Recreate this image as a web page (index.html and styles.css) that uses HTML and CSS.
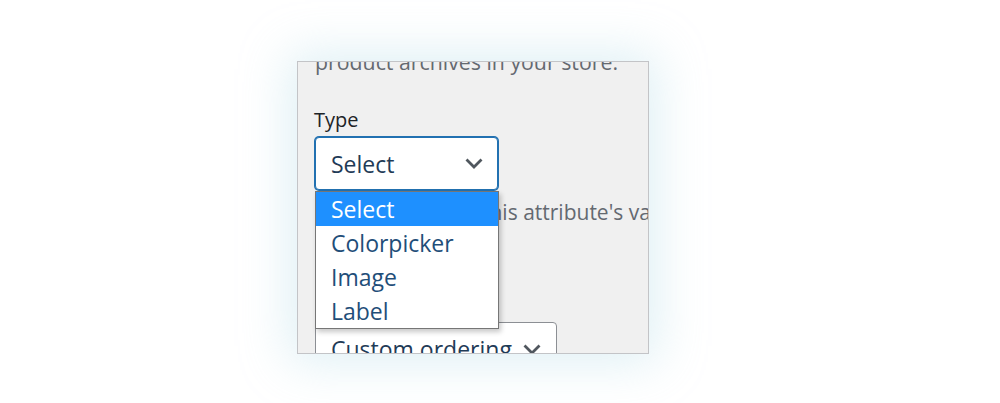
FILE: index.html
```html
<!DOCTYPE html>
<html lang="en">
<head>
<meta charset="utf-8">
<title>Attribute type</title>
<link rel="stylesheet" href="styles.css">
</head>
<body>
<div class="stage">
  <div class="panel">
    <div class="content">
      <p class="desc first">product archives in your store.</p>
      <label class="label">Type</label>
      <div class="select-wrap">
        <div class="select focused">
          <span class="value">Select</span>
          <svg class="chev" width="18" height="11" viewBox="0 0 18 11"><path d="M1.5 1.5 L9 9 L16.5 1.5" fill="none" stroke="#50575e" stroke-width="2.8"/></svg>
        </div>
        <ul class="menu">
          <li class="opt active">Select</li>
          <li class="opt">Colorpicker</li>
          <li class="opt">Image</li>
          <li class="opt">Label</li>
        </ul>
      </div>
      <p class="desc second">Determines how this attribute's values are displayed.</p>
      <label class="label sort">Default sort order</label>
      <div class="select small">
        <span class="value">Custom ordering</span>
        <svg class="chev" width="18" height="11" viewBox="0 0 18 11"><path d="M1.5 1.5 L9 9 L16.5 1.5" fill="none" stroke="#50575e" stroke-width="2.8"/></svg>
      </div>
    </div>
  </div>
</div>
</body>
</html>
```

FILE: styles.css
```css
html, body {
  margin: 0;
  padding: 0;
  background: #ffffff;
}
body {
  width: 1000px;
  height: 403px;
  overflow: hidden;
  font-family: "Open Sans", "Noto Sans", sans-serif;
}
.stage {
  padding-top: 61px;
  padding-left: 297px;
}
.panel {
  width: 350px;
  height: 291px;
  background: #f0f0f0;
  border: 1px solid #c3c4c7;
  overflow: hidden;
  box-shadow: 0 0 45px 8px rgba(170, 215, 228, 0.38);
}
.content {
  padding-left: 17px;
  width: 440px;
}
.desc {
  margin: 0;
  font-size: 21px;
  line-height: 30px;
  color: #646970;
  white-space: nowrap;
}
.desc.first {
  margin-top: -15px;
  font-size: 21.3px;
}
.label {
  display: block;
  margin-top: 28px;
  margin-left: -1px;
  font-size: 20px;
  line-height: 30px;
  color: #1d2327;
}
.select-wrap {
  position: relative;
  width: 183px;
  margin-top: 2px;
}
.select {
  box-sizing: border-box;
  display: flex;
  align-items: center;
  justify-content: space-between;
  background: #ffffff;
  border: 1px solid #8c8f94;
  border-radius: 4px;
  padding: 0 14px 0 15px;
  height: 53px;
}
.select.focused {
  width: 183px;
  border-color: #2271b1;
  box-shadow: 0 0 0 1px #2271b1;
}
.value {
  font-size: 23px;
  color: #1f3b57;
  white-space: nowrap;
}
.chev {
  display: block;
  flex: none;
}
.menu {
  position: absolute;
  left: 0;
  top: 54px;
  width: 184px;
  box-sizing: border-box;
  margin: 0;
  padding: 0;
  list-style: none;
  background: #ffffff;
  border: 1px solid #767676;
  box-shadow: 2px 3px 5px rgba(0, 0, 0, 0.22);
  z-index: 2;
}
.opt {
  height: 34px;
  line-height: 34px;
  padding-left: 15px;
  font-size: 23px;
  color: #1f4e79;
}
.opt.active {
  background: #1e90ff;
  color: #ffffff;
}
.desc.second {
  margin-top: 7px;
  width: 420px;
  white-space: normal;
}
.label.sort {
  margin-top: 28px;
}
.select.small {
  width: 242px;
  margin-top: 7px;
  padding: 0 15px 0 15px;
  align-items: flex-start;
  padding-top: 10px;
}
.select.small .chev {
  margin-top: 11px;
}
```
